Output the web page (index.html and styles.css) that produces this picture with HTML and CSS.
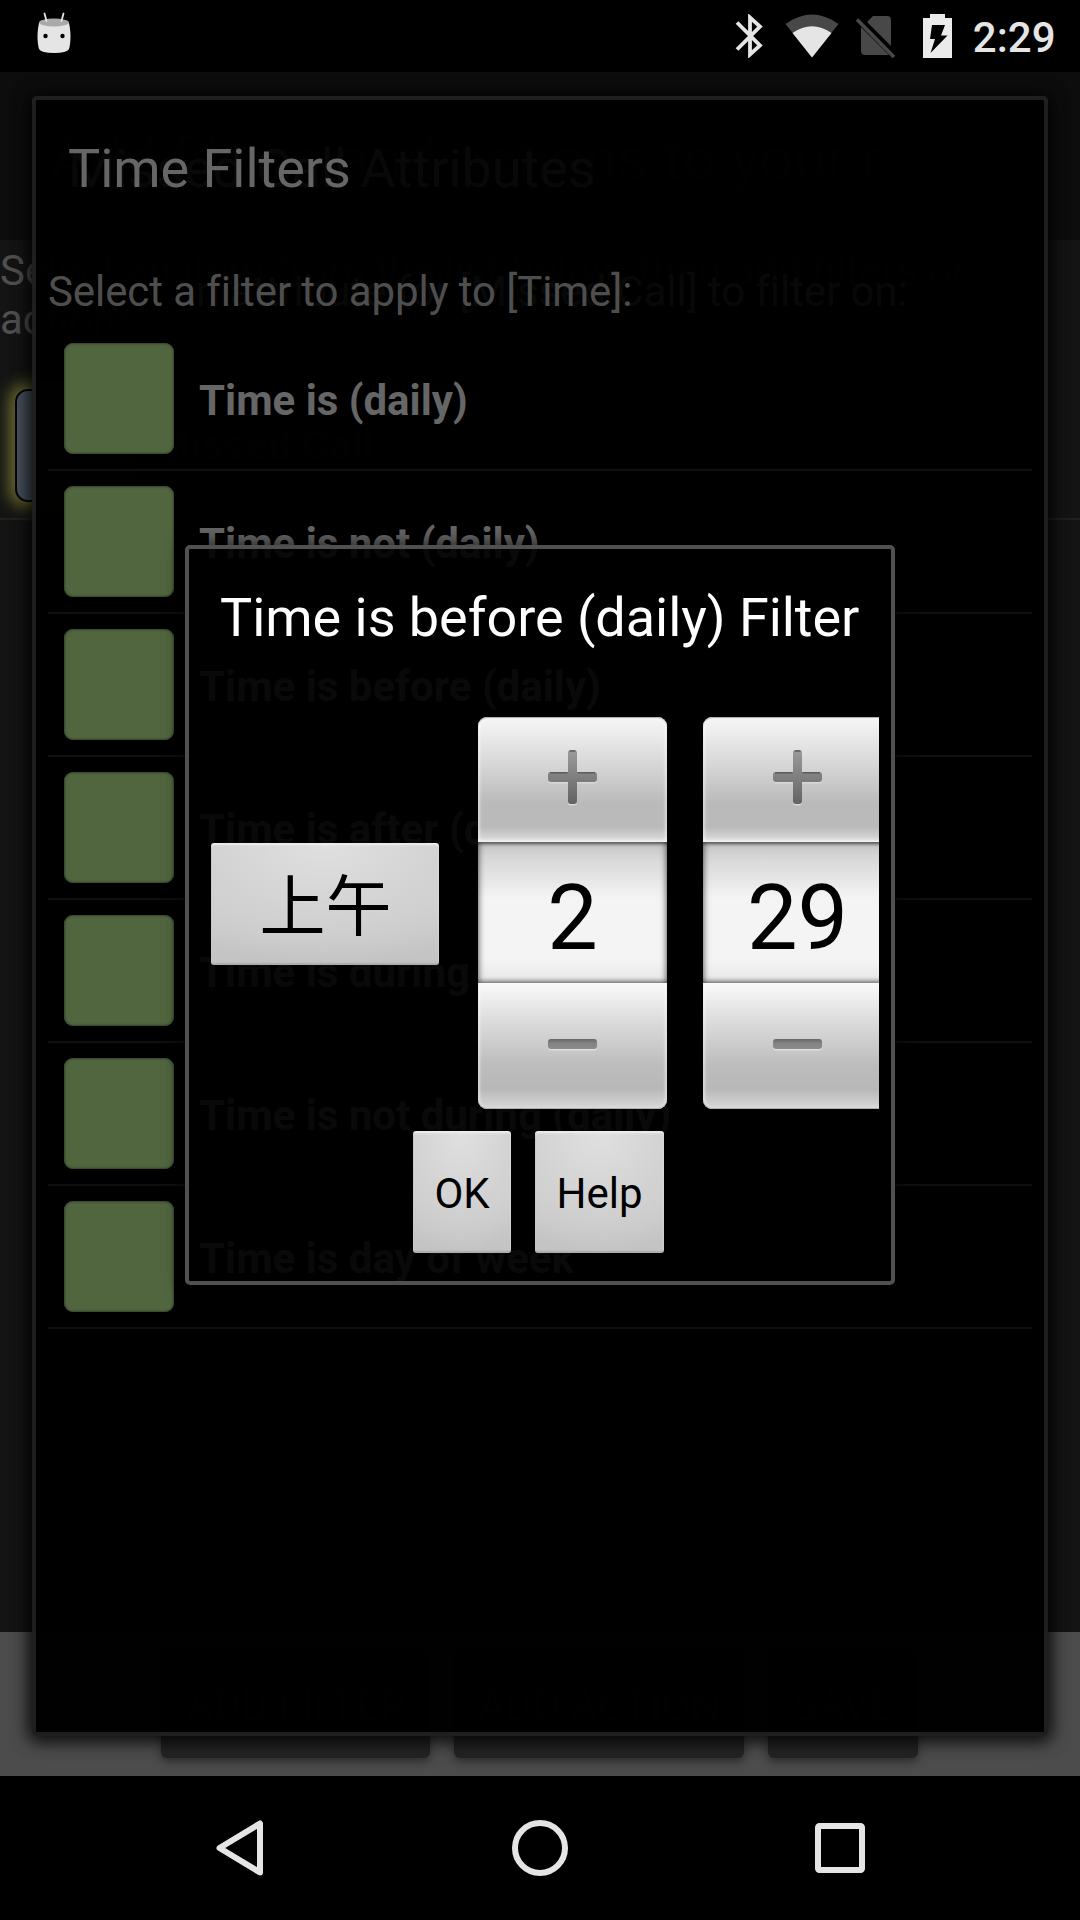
FILE: index.html
```html
<!DOCTYPE html>
<html lang="en">
<head>
<meta charset="utf-8">
<title>Time Filters</title>
<link rel="stylesheet" href="styles.css">
</head>
<body>
<div class="screen">
  <header class="status-bar">
    <svg class="app-icon" width="34" height="42" viewBox="0 0 34 42">
      <path d="M2 11 C0 20 0 30 2 37 Q4 41 17 41 Q30 41 32 37 C34 30 34 20 32 11 Z" fill="#e5e5e5"/>
      <ellipse cx="17" cy="10.500" rx="15" ry="4" fill="#aaa"/>
      <path d="M7.500 1.500 L9.500 9 M26.500 1.500 L24.500 9" stroke="#e5e5e5" stroke-width="1.800" stroke-linecap="round"/>
      <circle cx="8.500" cy="24" r="2.200"/><circle cx="25.500" cy="24" r="2.200"/>
    </svg>
    <div class="status-icons">
      <svg width="28" height="44" viewBox="0 0 28 44">
        <path d="M2 8.500 L25 31.500 L15 40.500 V3.500 L25 12.500 L2 35.500" fill="none" stroke="#e5e5e5" stroke-width="3.800"/>
      </svg>
      <svg class="wifi" width="54" height="44" viewBox="0 0 54 44">
        <path d="M0.500 10 Q27 -9 53.500 10 L27 43.500 Z" fill="#484848"/>
        <path d="M7.500 19 Q27 5.500 46.500 19 L27 43.500 Z" fill="#e5e5e5"/>
      </svg>
      <svg class="sim" width="40" height="44" viewBox="0 0 40 44">
        <path d="M11 8 L17 2 H31 Q35 2 35 6 V32 Z M5 13 L33 41 H9 Q5 41 5 37 Z" fill="#484848"/>
        <path d="M1 5.500 L38 43" stroke="#484848" stroke-width="3.600"/>
      </svg>
      <svg class="battery" width="29" height="44" viewBox="0 0 29 44">
        <path d="M0 4 H7 V0 H22 V4 H29 V44 H0 Z" fill="#ebebeb"/>
        <path d="M9 11 H22 L18 21.500 H24.500 L7.500 39 L12 25 H7 Z" fill="#000"/>
      </svg>
      <span class="clock">2:29</span>
    </div>
  </header>

  <main class="stage">
    <section class="base-page">
      <div class="action-bar">Add filters and actions to your r...</div>
      <div class="base-body">
        <p class="base-hint">Select an item from the list below, then add filters or actions:</p>
        <div class="base-item"><span class="base-tile"></span><b>Missed Call</b></div>
      </div>
      <div class="base-buttons">
        <span class="base-button add-filter">ADD FILTER</span>
        <span class="base-button add-action">ADD ACTION</span>
        <span class="base-button save">SAVE</span>
      </div>
    </section>

    <section class="window attributes">
      <h2 class="window-title">Missed Call Attributes</h2>
      <p class="window-hint">Select an attribute for [Missed Call] to filter on:</p>
    </section>

    <section class="window filters">
      <h2 class="window-title">Time Filters</h2>
      <p class="window-hint">Select a filter to apply to [Time]:</p>
      <ul class="filter-list">
        <li><i></i><b>Time is (daily)</b></li>
        <li><i></i><b>Time is not (daily)</b></li>
        <li><i></i><b>Time is before (daily)</b></li>
        <li><i></i><b>Time is after (daily)</b></li>
        <li><i></i><b>Time is during (daily)</b></li>
        <li><i></i><b>Time is not during (daily)</b></li>
        <li><i></i><b>Time is day of week</b></li>
      </ul>
    </section>

    <section class="dialog">
      <h1 class="dialog-title">Time is before (daily) Filter</h1>
      <div class="time-picker">
        <button class="key ampm">上午</button>
        <div class="spinner">
          <div class="step up"><svg width="51" height="59" viewBox="0 0 51 59"><use href="#plus"/></svg></div>
          <div class="value">2</div>
          <div class="step down"><svg width="51" height="14" viewBox="0 0 51 14"><use href="#minus"/></svg></div>
        </div>
        <div class="spinner">
          <div class="step up"><svg width="51" height="59" viewBox="0 0 51 59"><use href="#plus"/></svg></div>
          <div class="value">29</div>
          <div class="step down"><svg width="51" height="14" viewBox="0 0 51 14"><use href="#minus"/></svg></div>
        </div>
      </div>
      <div class="dialog-actions">
        <button class="key ok">OK</button>
        <button class="key help">Help</button>
      </div>
    </section>
  </main>

  <nav class="nav-bar">
    <svg width="50" height="58" viewBox="0 0 50 58"><path d="M45 4.500 V53.500 L4.500 29 Z" fill="none" stroke="#e5e5e5" stroke-width="6" stroke-linejoin="round"/></svg>
    <svg width="56" height="58" viewBox="0 0 56 58"><circle cx="28" cy="29" r="25" fill="none" stroke="#e5e5e5" stroke-width="6"/></svg>
    <svg width="50" height="58" viewBox="0 0 50 58"><rect x="3" y="7" width="44" height="44" rx="1.500" fill="none" stroke="#e5e5e5" stroke-width="6"/></svg>
  </nav>
</div>

<svg class="defs" width="0" height="0">
  <defs>
    <linearGradient id="ink" x1="0" y1="0" x2="0" y2="1">
      <stop offset="0" stop-color="#9b9b9b"/><stop offset="1" stop-color="#636363"/>
    </linearGradient>
    <linearGradient id="bar-ink" x1="0" y1="0" x2="0" y2="1">
      <stop offset="0" stop-color="#666"/><stop offset=".4" stop-color="#828282"/><stop offset="1" stop-color="#8c8c8c"/>
    </linearGradient>
    <g id="plus">
      <path d="M24 2 h3 q3 0 3 3 v19 h17 q3 0 3 3 v4 q0 3 -3 3 h-17 v19 q0 3 -3 3 h-3 q-3 0 -3 -3 v-19 h-17 q-3 0 -3 -3 v-4 q0 -3 3 -3 h17 v-19 q0 -3 3 -3 z" fill="#d8d8d8" transform="translate(0 1.500)"/>
      <path d="M24 2 h3 q3 0 3 3 v19 h17 q3 0 3 3 v4 q0 3 -3 3 h-17 v19 q0 3 -3 3 h-3 q-3 0 -3 -3 v-19 h-17 q-3 0 -3 -3 v-4 q0 -3 3 -3 h17 v-19 q0 -3 3 -3 z" fill="url(#ink)"/>
      <path d="M3 24.800 H20.500 M30.500 24.800 H48 M22.500 3 H28.500" stroke="#5c5c5c" stroke-width="1.600"/>
    </g>
    <g id="minus">
      <rect x="1" y="3.500" width="49" height="10" rx="3" fill="#dedede"/>
      <rect x="1" y="2" width="49" height="10" rx="3" fill="url(#bar-ink)"/>
    </g>
  </defs>
</svg>
</body>
</html>
```
FILE: styles.css
```css
* { box-sizing: border-box; margin: 0; padding: 0; }
body { background: #000; font-family: Roboto, "Noto Sans CJK SC", sans-serif; }
svg { display: block; }
.defs { position: absolute; }

.screen {
  width: 1080px;
  height: 1920px;
  display: grid;
  grid-template-rows: 72px 1704px 144px;
  overflow: hidden;
  background: #000;
}

/* status bar */
.status-bar {
  display: flex;
  justify-content: space-between;
  align-items: flex-start;
  padding: 12px 24.5px 0 37px;
}
.status-icons { display: flex; align-items: flex-start; padding-top: 2px; }
.wifi { margin-left: 22px; }
.sim { margin-left: 17px; }
.battery { margin-left: 27px; }
.clock {
  margin-left: 20.5px;
  font-size: 42px;
  line-height: 48px;
  font-weight: 500;
  color: #e5e5e5;
}

/* stacked windows */
.stage { position: relative; overflow: hidden; }

.base-page {
  height: 100%;
  display: grid;
  grid-template-rows: 168px 1392px 144px;
  background: #141414;
}
.action-bar {
  background: #0d0d0d;
  padding-left: 50px;
  font-size: 60px;
  line-height: 173px;
  color: #4e4e4e;
}
.base-hint {
  padding-top: 6px;
  font-size: 42px;
  line-height: 49px;
  color: #505050;
}
.base-item {
  display: flex;
  align-items: center;
  gap: 27px;
  height: 176px;
  padding: 29px 0 0 15px;
  border-bottom: 2px solid #202020;
  font-size: 42px;
  color: #484848;
}
.base-tile {
  width: 112px;
  height: 113px;
  border-radius: 13px;
  background: #48525f;
  border: 2px solid #050608;
  box-shadow: 0 0 15px 6px #6e6e30;
}
.base-buttons {
  display: flex;
  gap: 24px;
  padding: 18px 0 18px 161px;
  background: #4c4c4c;
}
.base-button {
  border-radius: 6px;
  background: #242424;
  box-shadow: 0 4px 10px rgba(0, 0, 0, .4);
  font-size: 42px;
  line-height: 112px;
  text-align: center;
  color: #444;
}
.add-filter { width: 269px; }
.add-action { width: 290px; }
.save { width: 150px; }

.window {
  position: absolute;
  left: 32px;
  top: 24px;
  width: 1016px;
  height: 1640px;
  border: 4px solid #1f1f1f;
  border-radius: 5px;
  padding: 0 12px;
}
.attributes { background: rgba(0, 0, 0, .75); box-shadow: 0 2px 16px 3px rgba(0, 0, 0, .6); }
.filters { background: rgba(0, 0, 0, .92); box-shadow: 0 2px 18px 3px rgba(0, 0, 0, .5); }
.window-title {
  padding-left: 20px;
  font-size: 54px;
  line-height: 137px;
  letter-spacing: -.04px;
  font-weight: 400;
  color: #666;
}
.window-hint {
  padding: 30px 0 12px;
  font-size: 42px;
  line-height: 49px;
  letter-spacing: -.09px;
  color: #4e4e4e;
  white-space: nowrap;
}
.attributes .window-hint { color: #666; }
.filter-list { list-style: none; }
.filter-list li {
  display: flex;
  align-items: center;
  gap: 25px;
  height: 143px;
  padding-left: 16px;
  border-bottom: 2px solid #0f0f0f;
}
.filter-list i {
  width: 110px;
  height: 111px;
  border-radius: 9px;
  background: #51663f;
  box-shadow: inset 0 0 2px 1px #33422a;
}
.filter-list b { font-size: 42px; line-height: 48px; padding-top: 4px; color: #666; }

/* time dialog */
.dialog {
  position: absolute;
  left: 185px;
  top: 473px;
  width: 710px;
  height: 740px;
  border: 4px solid #505050;
  border-radius: 5px;
  background: rgba(0, 0, 0, .91);
  box-shadow: 0 2px 18px 3px rgba(0, 0, 0, .7);
  padding: 0 12px 0 13px;
}
.dialog-title {
  padding-left: 18px;
  font-size: 54px;
  line-height: 137px;
  letter-spacing: -.04px;
  font-weight: 400;
  color: #fff;
  white-space: nowrap;
}
.time-picker {
  display: flex;
  align-items: center;
  height: 392px;
  margin-top: 31px;
  padding-left: 9px;
  overflow: hidden;
}
.key {
  display: block;
  flex: none;
  height: 122px;
  border: 0;
  border-radius: 3px;
  background: radial-gradient(ellipse 90% 100% at 50% 0, #e0e0e0, #d2d2d2 60%, transparent), linear-gradient(#d8d8d8, #c2c2c2);
  box-shadow: inset 0 2px 2px #efefef, inset 0 -2px 1px #adadad, inset 1px 0 1px #bbb;
  font-family: inherit;
  font-size: 42px;
  line-height: 126px;
  text-align: center;
  color: #000;
}
.ampm { width: 228px; margin-top: -18px; font-size: 66px; line-height: 130px; padding-left: 1px; }
.spinner { flex: none; width: 189px; height: 392px; margin-left: 36px; }
.ampm + .spinner { margin-left: 39px; }
.step {
  display: flex;
  padding-left: 69px;
}
.up {
  height: 125px;
  padding-top: 31px;
  border-radius: 9px 9px 0 0;
  background: linear-gradient(#f7f7f7, #dcdcdc 32%, #bababa 69%, #bababa 88%, #d2d2d2 96%, #f0f0f0);
  box-shadow: inset 0 1px 1px #aaa, inset 2px 0 3px rgba(255, 255, 255, .5), inset -2px 0 3px rgba(255, 255, 255, .5);
}
.value {
  height: 141px;
  background: linear-gradient(#888 0, #c9c9c9 3%, #d8d8d8 12%, #f4f4f4 40%, #f4f4f4 85%, #e9e9e9 96%, #c4c4c4);
  box-shadow: inset 2px 0 6px -1px rgba(0, 0, 0, .5), inset -2px 0 6px -1px rgba(0, 0, 0, .5);
  font-size: 90px;
  line-height: 153px;
  text-align: center;
  color: #000;
}
.down {
  height: 126px;
  padding-top: 54px;
  border-radius: 0 0 9px 9px;
  background: linear-gradient(#fafafa, #dedede 28%, #bcbcbc 66%, #b8b8b8 84%, #d0d0d0 96%, #dedede);
  box-shadow: inset 0 -1px 1px #aaa, inset 2px 0 3px rgba(255, 255, 255, .5), inset -2px 0 3px rgba(255, 255, 255, .5);
}
.dialog-actions {
  display: flex;
  gap: 24px;
  padding: 22px 0 0 211px;
}
.ok { width: 98px; }
.help { width: 129px; }

/* navigation bar */
.nav-bar {
  display: flex;
  align-items: flex-start;
  padding: 43px 0 0 215px;
  gap: 247px;
}
```
